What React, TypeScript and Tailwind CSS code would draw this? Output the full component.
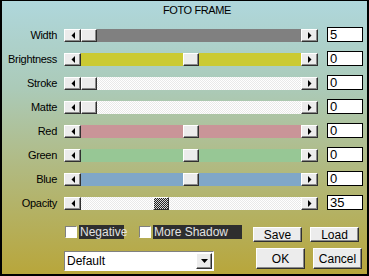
import React from "react";

const font = { fontFamily: '"Liberation Sans", Arial, sans-serif' };

const raised =
  "border border-t-white border-l-white border-r-[#303030] border-b-[#303030] shadow-[inset_-1px_-1px_0_#8a8a8a] bg-[#ececec]";
const sunken =
  "border border-t-[#808080] border-l-[#808080] border-r-white border-b-white";
const dither =
  "bg-[repeating-conic-gradient(#ffffff_0_25%,#e9e9e9_0_50%)] bg-size-[2px_2px]";

type SliderRow = {
  label: string;
  value: string;
  track: string;
  thumb: number;
  dark?: boolean;
};

const rows: SliderRow[] = [
  { label: "Width", value: "5", track: "bg-[#808080]", thumb: 0 },
  { label: "Brightness", value: "0", track: "bg-[#cbca33]", thumb: 102 },
  { label: "Stroke", value: "0", track: dither, thumb: 0 },
  { label: "Matte", value: "0", track: dither, thumb: 0 },
  { label: "Red", value: "0", track: "bg-[#c99598]", thumb: 102 },
  { label: "Green", value: "0", track: "bg-[#97c795]", thumb: 102 },
  { label: "Blue", value: "0", track: "bg-[#80a7c8]", thumb: 102 },
  { label: "Opacity", value: "35", track: dither, thumb: 72, dark: true },
];

function Arrow({ dir }: { dir: "left" | "right" }) {
  return (
    <div className={`flex h-full w-[17px] shrink-0 items-center justify-center ${raised}`}>
      <svg width="4" height="7" viewBox="0 0 4 7">
        {dir === "left" ? (
          <polygon points="4,0 4,7 0.5,3.5" fill="#000" />
        ) : (
          <polygon points="0,0 0,7 3.5,3.5" fill="#000" />
        )}
      </svg>
    </div>
  );
}

function Slider({ row }: { row: SliderRow }) {
  return (
    <div className="mt-[2px] flex h-[13px] w-[254px]">
      <Arrow dir="left" />
      <div className={`flex h-full flex-1 ${row.track}`}>
        <div style={{ width: row.thumb }} className="shrink-0" />
        <div
          className={`h-full w-[16px] shrink-0 ${
            row.dark
              ? "border border-t-white border-l-white border-r-[#303030] border-b-[#303030] bg-[repeating-conic-gradient(#222_0_25%,#d8d8d8_0_50%)] bg-size-[2px_2px]"
              : raised
          }`}
        />
      </div>
      <Arrow dir="right" />
    </div>
  );
}

function Check({ label, w }: { label: string; w: string }) {
  return (
    <div className="flex items-start">
      <div className={`mt-[1px] h-[12px] w-[12px] bg-white ${sunken}`} />
      <div
        className={`ml-[2px] flex h-[14px] items-center bg-[#2e2e2e] pl-[1px] text-[12px] leading-none text-[#e2e2e2] ${w}`}
      >
        {label}
      </div>
    </div>
  );
}

function Btn({ label, h }: { label: string; h: string }) {
  return (
    <div className={`flex w-[49px] items-center justify-center text-[12px] text-black ${h} ${raised}`}>
      {label}
    </div>
  );
}

export default function App() {
  return (
    <div
      style={font}
      className="box-border flex h-[276px] w-[369px] flex-col border-t border-r-2 border-b-2 border-l-2 border-black bg-[linear-gradient(180deg,#afd7dc_0%,#abcab8_32%,#b1b97f_62%,#b8a63b_100%)] text-black"
    >
      <div className="ml-[161px] pt-[3px] text-[11px] leading-[13px] tracking-[-0.4px]">FOTO FRAME</div>

      <div className="mt-[10px] flex flex-col gap-[9px]">
        {rows.map((row) => (
          <div key={row.label} className="flex h-[15px] items-start">
            <div className="mt-[2px] w-[56px] pr-[1px] text-right text-[11px] leading-[13px] tracking-[-0.3px]">
              {row.label}
            </div>
            <div className="ml-[6px]">
              <Slider row={row} />
            </div>
            <div className="ml-[9px] flex h-[15px] w-[36px] items-center border border-black bg-white pl-[2px] text-[13px] leading-none">
              {row.value}
            </div>
          </div>
        ))}
      </div>

      <div className="mt-[15px] flex h-[17px] items-start">
        <div className="ml-[63px]">
          <Check label="Negative" w="w-[45px]" />
        </div>
        <div className="ml-[15px]">
          <Check label="More Shadow" w="w-[89px]" />
        </div>
        <div className="ml-[11px] mt-[2px]">
          <Btn label="Save" h="h-[15px]" />
        </div>
        <div className="ml-[8px] mt-[2px]">
          <Btn label="Load" h="h-[15px]" />
        </div>
      </div>

      <div className="mt-[6px] flex items-start">
        <div
          className={`ml-[62px] mt-[3px] flex h-[20px] w-[150px] items-center bg-white pl-[2px] text-[12px] ${sunken}`}
        >
          <span className="flex-1">Default</span>
          <div className={`mr-[1px] flex h-[16px] w-[16px] items-center justify-center ${raised}`}>
            <svg width="7" height="4" viewBox="0 0 7 4">
              <polygon points="0,0 7,0 3.5,4" fill="#000" />
            </svg>
          </div>
        </div>
        <div className="ml-[42px]">
          <Btn label="OK" h="h-[21px]" />
        </div>
        <div className="ml-[8px]">
          <Btn label="Cancel" h="h-[21px]" />
        </div>
      </div>
    </div>
  );
}
